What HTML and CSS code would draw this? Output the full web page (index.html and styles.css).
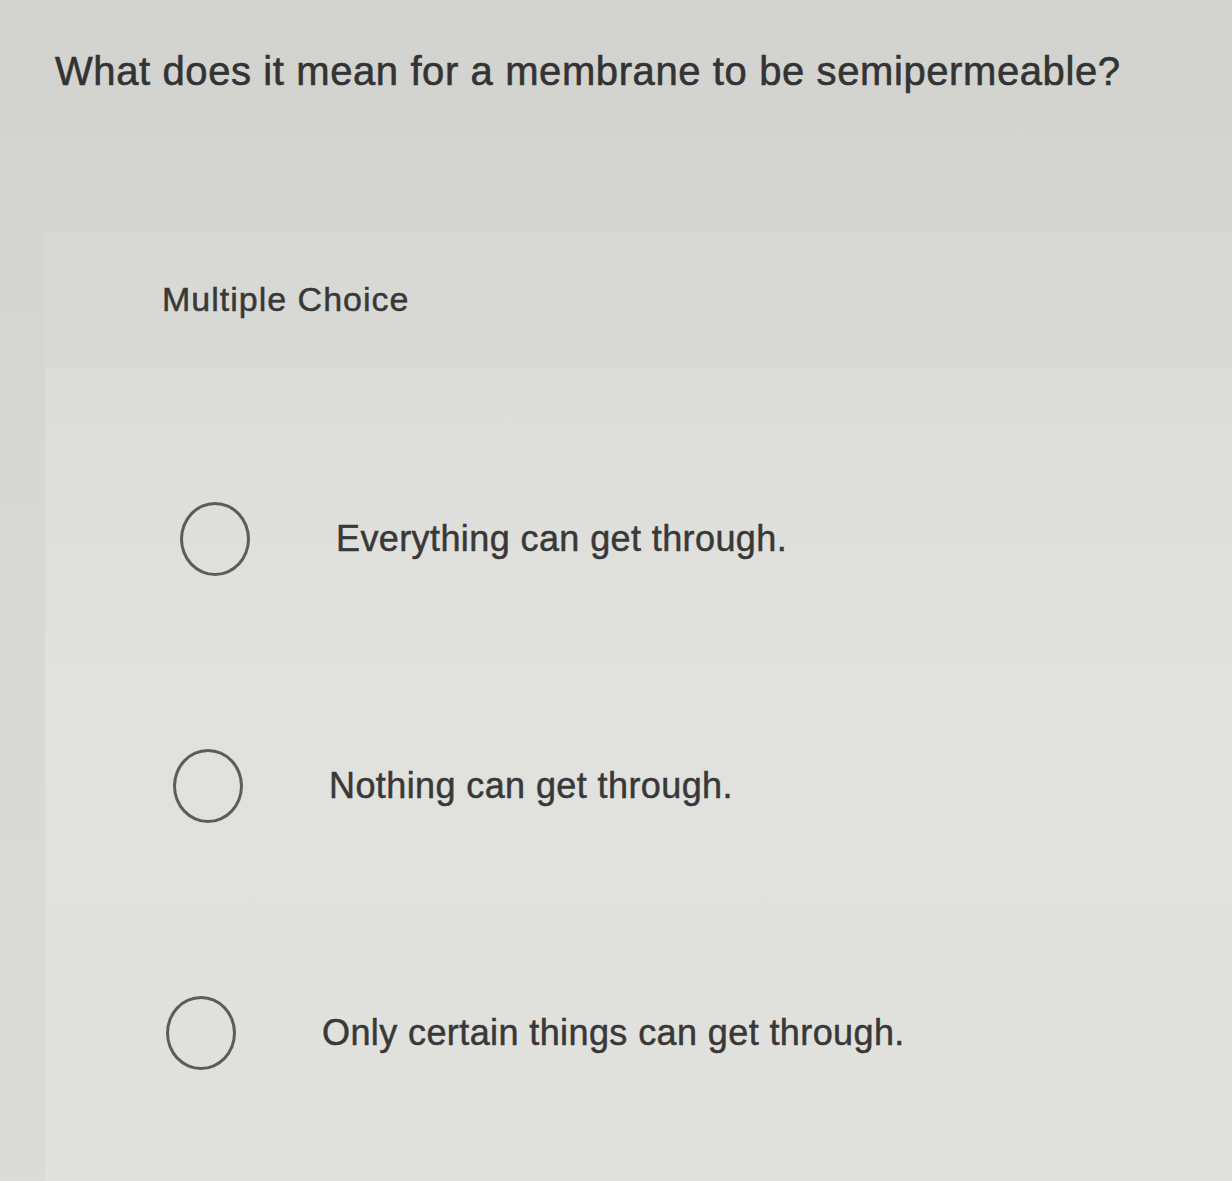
FILE: index.html
```html
<!DOCTYPE html>
<html lang="en">
<head>
<meta charset="utf-8">
<title>Multiple Choice</title>
<link rel="stylesheet" href="styles.css">
</head>
<body>
<main class="page">
  <h1 class="question">What does it mean for a membrane to be semipermeable?</h1>
  <section class="panel">
    <header class="panel-head">Multiple Choice</header>
    <ul class="options">
      <li class="option option-a"><span class="radio"></span><span class="label">Everything can get through.</span></li>
      <li class="option option-b"><span class="radio"></span><span class="label">Nothing can get through.</span></li>
      <li class="option option-c"><span class="radio"></span><span class="label">Only certain things can get through.</span></li>
    </ul>
  </section>
</main>
</body>
</html>
```
FILE: styles.css
```css
html, body {
  margin: 0;
  padding: 0;
}
body {
  background: linear-gradient(180deg, #d2d2ce 0%, #d7d7d3 40%, #dbdbd7 100%);
  font-family: "Liberation Sans", Arial, sans-serif;
  color: #383838;
  width: 1232px;
  height: 1181px;
  overflow: hidden;
}
.page {
  padding: 44px 0 0 55px;
}
.question {
  margin: 0;
  font-size: 40px;
  font-weight: 400;
  line-height: 54px;
  color: #333;
  letter-spacing: 0.6px;
  -webkit-text-stroke: 0.6px #333;
}
.panel {
  margin: 134px 0 0 -10px;
}
.panel-head {
  background: #d8d8d4;
  height: 136px;
  box-sizing: border-box;
  padding: 48px 0 0 117px;
  font-size: 34px;
  line-height: 38px;
  letter-spacing: 1px;
  color: #383838;
  -webkit-text-stroke: 0.5px #383838;
}
.options {
  list-style: none;
  margin: 0;
  padding: 47px 0 0 135px;
  background: linear-gradient(180deg, #dcdcd8 0%, #e1e1dd 40%, #e0e0dc 100%);
  height: 813px;
  box-sizing: border-box;
}
.option {
  display: flex;
  align-items: center;
  height: 247px;
  gap: 86px;
}
.option-b {
  margin-left: -7px;
}
.option-c {
  margin-left: -14px;
}
.radio {
  width: 70px;
  height: 74px;
  border: 3px solid #5c5c5c;
  border-radius: 50%;
  box-sizing: border-box;
  flex: none;
}
.label {
  font-size: 36px;
  line-height: 42px;
  letter-spacing: 0.4px;
  color: #383838;
  -webkit-text-stroke: 0.5px #383838;
}
```
